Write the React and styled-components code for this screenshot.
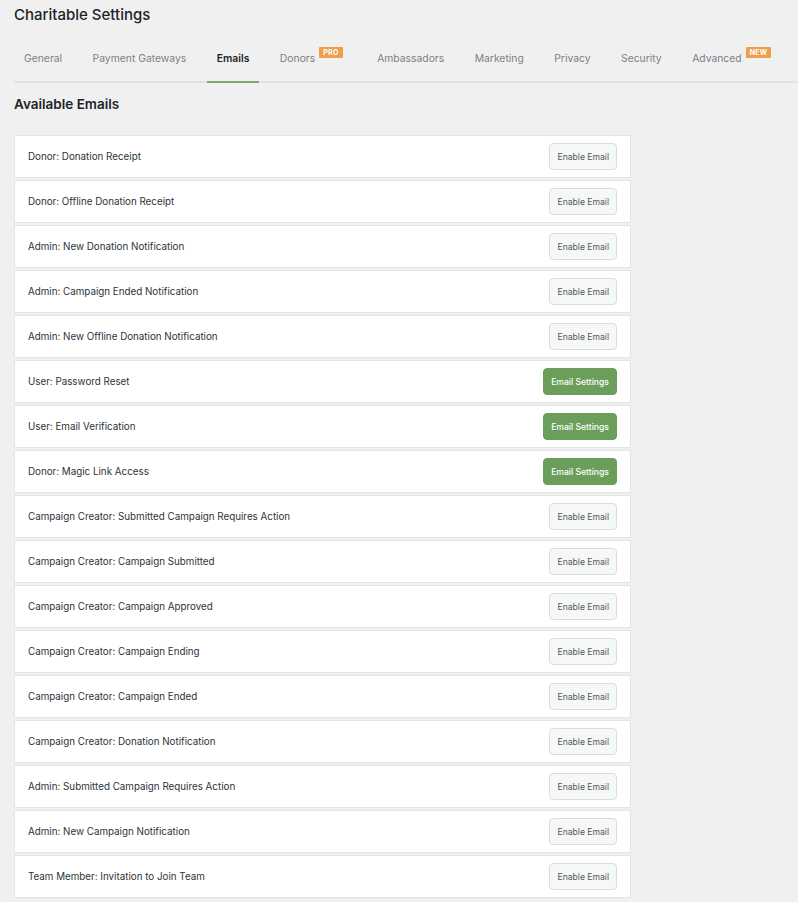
import React from 'react';
import styled, { createGlobalStyle } from 'styled-components';

const GlobalStyle = createGlobalStyle`
  html, body {
    margin: 0;
    padding: 0;
    background: #f0f0f1;
  }
  body {
    font-family: Inter, "Noto Sans", "Liberation Sans", sans-serif;
    -webkit-font-smoothing: antialiased;
  }
`;

const Page = styled.div`
  padding: 5px 0 20px 14px;
  min-height: 902px;
  box-sizing: border-box;
`;

const Title = styled.h1`
  margin: 0;
  font-size: 15px;
  line-height: 20px;
  font-weight: 500;
  color: #1d2327;
`;

const Tabs = styled.nav`
  display: flex;
  align-items: flex-end;
  gap: 10.5px;
  margin-top: 10px;
  border-bottom: 2px solid #e2e2e3;
`;

const Tab = styled.a`
  display: flex;
  align-items: flex-start;
  padding: 16px 10px 16px;
  margin-bottom: -2px;
  font-size: 10.35px;
  line-height: 14px;
  color: ${(p) => (p.$active ? '#1d2327' : '#7c8086')};
  font-weight: ${(p) => (p.$active ? 600 : 400)};
  border-bottom: 2px solid ${(p) => (p.$active ? '#7fa86f' : 'transparent')};
  text-decoration: none;
  cursor: pointer;
  white-space: nowrap;
`;

const Badge = styled.span`
  display: inline-block;
  margin: -4px 4px 0 4px;
  padding: 0 4px;
  height: 11px;
  line-height: 11px;
  background: #eda04c;
  color: #fff;
  font-size: 7px;
  font-weight: 700;
  letter-spacing: 0.3px;
  border-radius: 1px;
`;

const Heading = styled.h2`
  margin: 12px 0 22px;
  font-size: 13.5px;
  line-height: 18px;
  font-weight: 600;
  color: #1d2327;
`;

const List = styled.div`
  display: flex;
  flex-direction: column;
  gap: 2px;
  width: 617px;
`;

const Row = styled.div`
  display: flex;
  align-items: center;
  justify-content: space-between;
  height: 43px;
  box-sizing: border-box;
  padding: 0 13px;
  background: #fff;
  border: 1px solid #e4e4e5;
`;

const Label = styled.span`
  font-size: 9.8px;
  color: #2c3338;
`;

const Button = styled.button`
  height: 27px;
  padding: 0 7px;
  border-radius: 4px;
  font-family: inherit;
  font-size: 8.6px;
  cursor: pointer;
  border: 1px solid ${(p) => (p.$primary ? '#6a9e5a' : '#dcdcde')};
  background: ${(p) => (p.$primary ? '#6a9e5a' : '#f6f7f7')};
  color: ${(p) => (p.$primary ? '#fff' : '#50575e')};
  font-weight: ${(p) => (p.$primary ? 500 : 400)};
`;

const tabs = [
  { name: 'General' },
  { name: 'Payment Gateways' },
  { name: 'Emails', active: true },
  { name: 'Donors', badge: 'PRO' },
  { name: 'Ambassadors' },
  { name: 'Marketing' },
  { name: 'Privacy' },
  { name: 'Security' },
  { name: 'Advanced', badge: 'NEW' },
];

const emails = [
  ['Donor: Donation Receipt', false],
  ['Donor: Offline Donation Receipt', false],
  ['Admin: New Donation Notification', false],
  ['Admin: Campaign Ended Notification', false],
  ['Admin: New Offline Donation Notification', false],
  ['User: Password Reset', true],
  ['User: Email Verification', true],
  ['Donor: Magic Link Access', true],
  ['Campaign Creator: Submitted Campaign Requires Action', false],
  ['Campaign Creator: Campaign Submitted', false],
  ['Campaign Creator: Campaign Approved', false],
  ['Campaign Creator: Campaign Ending', false],
  ['Campaign Creator: Campaign Ended', false],
  ['Campaign Creator: Donation Notification', false],
  ['Admin: Submitted Campaign Requires Action', false],
  ['Admin: New Campaign Notification', false],
  ['Team Member: Invitation to Join Team', false],
];

export default function App() {
  return (
    <>
      <GlobalStyle />
      <Page>
        <Title>Charitable Settings</Title>
        <Tabs>
          {tabs.map((t) => (
            <Tab key={t.name} $active={t.active}>
              {t.name}
              {t.badge && <Badge>{t.badge}</Badge>}
            </Tab>
          ))}
        </Tabs>
        <Heading>Available Emails</Heading>
        <List>
          {emails.map(([label, enabled]) => (
            <Row key={label}>
              <Label>{label}</Label>
              <Button $primary={enabled}>
                {enabled ? 'Email Settings' : 'Enable Email'}
              </Button>
            </Row>
          ))}
        </List>
      </Page>
    </>
  );
}
